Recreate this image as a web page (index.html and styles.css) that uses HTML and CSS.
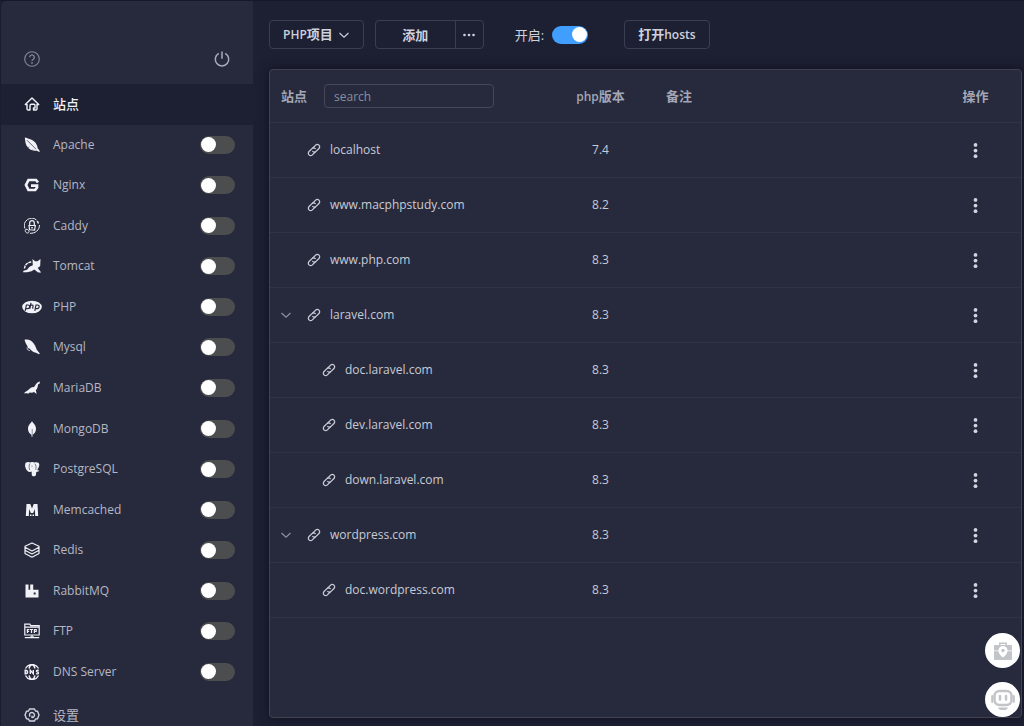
FILE: index.html
```
<!DOCTYPE html>
<html lang="zh-CN">
<head>
<meta charset="utf-8">
<title>站点</title>
<link rel="stylesheet" href="styles.css">
</head>
<body>
<svg class="sprite" aria-hidden="true">
  <symbol id="link" viewBox="0 0 24 24"><g fill="none" stroke="currentColor" stroke-width="2.200" stroke-linecap="round"><path d="M9.500 9l5.300-5.300a4 4 0 0 1 5.700 5.700l-5 5a4 4 0 0 1-5.700 0"/><path d="M14.500 15l-5.300 5.300a4 4 0 0 1-5.700-5.700l5-5a4 4 0 0 1 5.700 0"/></g></symbol>
  <symbol id="more" viewBox="0 0 16 16"><g fill="currentColor"><circle cx="8" cy="2" r="2"/><circle cx="8" cy="8" r="2"/><circle cx="8" cy="14" r="2"/></g></symbol>
  <symbol id="chevron" viewBox="0 0 12 12"><path d="M1.500 4L6 8.200 10.500 4" fill="none" stroke="currentColor" stroke-width="1.100"/></symbol>
</svg>
<div class="app">
  <aside class="sidebar">
    <div class="sidebar-top">
      <button class="icon-button help" aria-label="帮助"><svg class="icon" viewBox="0 0 16 16"><g fill="none" stroke="currentColor" stroke-width="1.100"><circle cx="8" cy="8" r="7.300"/><path d="M5.700 6.200a2.300 2.300 0 1 1 3.500 2c-.9.500-1.200.8-1.200 1.800" stroke-width="1.300"/></g><circle cx="8" cy="11.900" r=".9" fill="currentColor"/></svg></button>
      <button class="icon-button power" aria-label="电源"><svg class="icon" viewBox="0 0 16 16"><path d="M4.800 2.300a6.700 6.700 0 1 0 6.400 0M8 .5v7.300" fill="none" stroke="currentColor" stroke-width="1.500"/></svg></button>
    </div>
    <nav class="services">
      <div class="service active">
        <svg class="icon" viewBox="0 0 16 16"><path d="M6 14H4.200A1.200 1.200 0 0 1 3 12.800V8.500H1.300L8 2l6.700 6.500H13v4.300a1.200 1.200 0 0 1-1.200 1.200H9.500v-2H11V9.200a1 1 0 0 0-1-1H7.500c-1 0-1.500.7-1.500 1.500z" fill="none" stroke="currentColor" stroke-width="1.400" stroke-linejoin="round"/></svg>
        <a class="name" href="#sites">站点</a>
      </div>
      <div class="service">
        <svg class="icon" viewBox="0 0 16 16"><path d="M.8.500C4 1.500 8.500 2.200 11.300 5.500c1.500 1.800 2 3.800 2.400 5.700l2.100 2.800-.5 1-2.500-1.200C8 14 4.300 12 2.500 8.500 1.200 6 1.200 3 .8.500z" fill="currentColor"/><path d="M3 3.200l9 9" stroke="#272a3d" stroke-width=".7"/><path d="M4 10.700l1.300-.9M8 13.500l.8-1" stroke="#272a3d" stroke-width=".6"/></svg>
        <label class="name latin" for="s-apache">Apache</label><input class="switch" type="checkbox" id="s-apache">
      </div>
      <div class="service">
        <svg class="icon" viewBox="0 0 16 16"><path d="M14 5.500L12 3H4.500L2 8l2.500 5h6.700l1.800-2.500V8.700H7" fill="none" stroke="currentColor" stroke-width="2.700"/></svg>
        <label class="name latin" for="s-nginx">Nginx</label><input class="switch" type="checkbox" id="s-nginx">
      </div>
      <div class="service">
        <svg class="icon" viewBox="0 0 16 16"><g fill="none" stroke="currentColor"><path d="M.9 10.500A7.400 7.400 0 0 1 12.500 2M15.500 7c0 5-4.200 8.600-9.500 8.300M2 11.200c3.500 0 3.800 3.500 1.800 3.800S.3 12.500 2 11.200z"/><path d="M5.700 7V5a2.300 2.300 0 0 1 4.600 0v2M5 7.500h6.300l-.7 4.700-5-.4z" stroke-width="1.200"/><path d="M8 9v1.500M13.300 3l1.200 2.500" stroke-width="1.500"/></g></svg>
        <label class="name latin" for="s-caddy">Caddy</label><input class="switch" type="checkbox" id="s-caddy">
      </div>
      <div class="service">
        <svg class="icon wide" viewBox="0 0 20 16"><path d="M10.500 1l2.500 2.200h2.500L18.500 1l-.3 7-2.500 2 3.500 4.500h-3l-4-3-2.700 1.700-4.500 1.100H1l.5-1.500 3.500-1 2.500-3 3.300-1.500z" fill="currentColor"/><path d="M2.500 10.500C2.800 7 5 4.500 9.500 4" fill="none" stroke="currentColor" stroke-width="1.400" stroke-dasharray="3 .6"/></svg>
        <label class="name latin" for="s-tomcat">Tomcat</label><input class="switch" type="checkbox" id="s-tomcat">
      </div>
      <div class="service">
        <svg class="icon wide" viewBox="0 0 20 16"><ellipse cx="10" cy="8" rx="9.800" ry="6.300" fill="currentColor"/><g fill="none" stroke="#272a3d" stroke-width="1.200"><path d="M3.200 11.800L4.400 6h1.700c2.500 0 1.800 3.600-.4 3.600H4M9 3.800L7.900 9.700M8.500 6.200h1.700c1.100 0 .9.900.8 1.400l-.4 2.100M12.800 11.800L14 6h1.600c2.500 0 1.800 3.600-.4 3.600h-1.600"/></g></svg>
        <label class="name latin" for="s-php">PHP</label><input class="switch" type="checkbox" id="s-php">
      </div>
      <div class="service">
        <svg class="icon" viewBox="0 0 16 16"><path d="M.5.800C4.500 0 7.500 1.500 9.700 4.500c1.500 2 2.300 4 2.900 6l3.200 4-.8.700-3-1.400C9.300 13.500 7 11.500 5.800 9.700L4 9 3.300 7 1.500 3.700z" fill="currentColor"/><path d="M3 8.500l.5 2.200 2.500 1" fill="none" stroke="currentColor" stroke-width=".7"/></svg>
        <label class="name latin" for="s-mysql">Mysql</label><input class="switch" type="checkbox" id="s-mysql">
      </div>
      <div class="service">
        <svg class="icon" viewBox="0 0 16 16"><path d="M15.800 1.500l-.1 2-1.700.9c-.2 2.200-.5 4-2.100 5.700l.7 4-2.600-2-2 .7-2.300-.3L3.800 14l-.6-1-2.900.5.500-1.300 2.800-1.700c2-2.200 3.600-3.400 6.300-3.600 1.900-1 1.600-4.300 5.900-5.400z" fill="currentColor"/></svg>
        <label class="name latin" for="s-mariadb">MariaDB</label><input class="switch" type="checkbox" id="s-mariadb">
      </div>
      <div class="service">
        <svg class="icon" viewBox="0 0 16 16"><path d="M8 0c.6 2 4 3.500 4 7.700 0 3-1.500 4.800-3.500 6.200L8.300 16h-.6l-.2-2.100C5.500 12.500 4 10.700 4 7.700 4 3.500 7.400 2 8 0z" fill="currentColor"/><path d="M8.200 8v6" stroke="#272a3d" stroke-width=".5"/></svg>
        <label class="name latin" for="s-mongodb">MongoDB</label><input class="switch" type="checkbox" id="s-mongodb">
      </div>
      <div class="service">
        <svg class="icon" viewBox="0 0 16 16"><path d="M1.500 2C3 .7 5 1 6.500 1.500 8 .7 9.500 1 10.500 1.500c2-.8 4.700-.2 4.800 2 .1 2-1.300 4-2 5.700l2 .3c-.5 1-1.500 1.400-3 1.400l-.4 3c-.3 1.700-3.900 2-4.100 0l-.2-3.500-1.500.5C3.500 11.500 1.200 7.500 1 4.300z" fill="currentColor"/><path d="M5.800 2.500C4.700 4.500 5.200 6.500 5.600 9M11 2.800c1.300 1.700 1.100 3.800.8 6M7.500 5l1 .3" fill="none" stroke="#272a3d" stroke-width=".6"/></svg>
        <label class="name latin" for="s-postgres">PostgreSQL</label><input class="switch" type="checkbox" id="s-postgres">
      </div>
      <div class="service">
        <svg class="icon" viewBox="0 0 16 16"><path d="M2.500 2h3.800L8 6.500 9.700 2h3.800l.7 12h-3l-.4-7L9.200 11H6.800L5.200 7l-.4 7h-3zM6 12.500h1.500V14H6zM8.500 12.500H10V14H8.500z" fill="currentColor"/></svg>
        <label class="name latin" for="s-memcached">Memcached</label><input class="switch" type="checkbox" id="s-memcached">
      </div>
      <div class="service">
        <svg class="icon" viewBox="0 0 16 16"><g fill="none" stroke="currentColor" stroke-width="1.200" stroke-linejoin="round"><path d="M8 1l7 3.300v1L8 9 1 5.300v-1zM1 5v3.300L8 12l7-3.700V5M1 8v3.500L8 15.200l7-3.700V8"/></g></svg>
        <label class="name latin" for="s-redis">Redis</label><input class="switch" type="checkbox" id="s-redis">
      </div>
      <div class="service">
        <svg class="icon" viewBox="0 0 16 16"><path d="M1.500 1.500h3v5.300h1.700V1.500h3v5.300h5.300v7.700h-13z" fill="currentColor"/><path d="M9.700 9.500h2v2h-2z" fill="#272a3d"/></svg>
        <label class="name latin" for="s-rabbit">RabbitMQ</label><input class="switch" type="checkbox" id="s-rabbit">
      </div>
      <div class="service">
        <svg class="icon" viewBox="0 0 16 16"><g fill="none" stroke="currentColor" stroke-width="1.200"><path d="M.8 12V1.200h5l1 1.500h8.400V12zM.8 4.200h14.400M8 12v2.500M.8 14.700h14.400M6 14h4"/><path d="M3.400 10V6.500h2M3.400 8.300h1.700M6 6.500h3M7.500 6.500V10M10.400 10V6.500h1.800v2h-1.800"/></g></svg>
        <label class="name latin" for="s-ftp">FTP</label><input class="switch" type="checkbox" id="s-ftp">
      </div>
      <div class="service">
        <svg class="icon" viewBox="0 0 16 16"><g fill="none" stroke="currentColor" stroke-width="1.400"><path d="M1.500 4.500a7.300 7.300 0 0 1 13 0M1.500 11.500a7.300 7.300 0 0 0 13 0M5 4.500C5.600 2.500 6.800.8 8 .8s2.400 1.700 3 3.700M5 11.500c.6 2 1.800 3.700 3 3.700s2.400-1.700 3-3.700"/><path d="M1.200 6.200v3.600c3.200 0 3.200-3.600 0-3.600zM6.300 10V6.300l3 3.400V6M14.800 6.500c-2-.8-3.200.6-1.600 1.400 2.300.6 1.200 2.600-1.200 1.700"/></g></svg>
        <label class="name latin" for="s-dns">DNS Server</label><input class="switch" type="checkbox" id="s-dns">
      </div>
    </nav>
    <div class="settings">
      <svg class="icon" viewBox="0 0 16 16"><g fill="none" stroke="currentColor" stroke-width="1.400" stroke-linejoin="round"><path d="M5.500 2h5l1 2 2 .3L15 8l-1.500 3.700-2 .3-1 2h-5l-1-2-2-.3L1 8l1.500-3.700 2-.3z"/><path d="M6 9.500A2.500 2.500 0 1 1 8 10.500V8.700"/></g></svg>
      <a class="name" href="#settings">设置</a>
    </div>
  </aside>
  <main class="main">
    <div class="toolbar">
      <button class="button"><span><span class="latin">PHP</span>项目</span><svg class="caret"><use href="#chevron"/></svg></button>
      <div class="button-group">
        <button class="button add">添加</button>
        <button class="button extra" aria-label="更多"><svg class="caret" viewBox="0 0 12 12"><g fill="currentColor"><circle cx="1.500" cy="6" r="1.300"/><circle cx="6" cy="6" r="1.300"/><circle cx="10.500" cy="6" r="1.300"/></g></svg></button>
      </div>
      <div class="enable"><label for="enable">开启:</label><input class="switch" type="checkbox" id="enable" checked></div>
      <button class="button"><span>打开<span class="latin">hosts</span></span></button>
    </div>
    <section class="card">
      <table class="sites">
        <colgroup><col class="col-site"><col class="col-version"><col><col class="col-action"></colgroup>
        <thead>
          <tr><th><div class="search-cell"><label for="search">站点</label><input class="search latin" id="search" type="text" placeholder="search"></div></th><th class="center"><span class="latin">php</span>版本</th><th class="note">备注</th><th class="center">操作</th></tr>
        </thead>
        <tbody class="latin">
          <tr><td><div class="site"><span class="toggle"></span><svg class="link"><use href="#link"/></svg><a href="#s1">localhost</a></div></td><td class="center">7.4</td><td></td><td><button class="icon-button row-menu" aria-label="操作"><svg class="icon"><use href="#more"/></svg></button></td></tr>
          <tr><td><div class="site"><span class="toggle"></span><svg class="link"><use href="#link"/></svg><a href="#s2">www.macphpstudy.com</a></div></td><td class="center">8.2</td><td></td><td><button class="icon-button row-menu" aria-label="操作"><svg class="icon"><use href="#more"/></svg></button></td></tr>
          <tr><td><div class="site"><span class="toggle"></span><svg class="link"><use href="#link"/></svg><a href="#s3">www.php.com</a></div></td><td class="center">8.3</td><td></td><td><button class="icon-button row-menu" aria-label="操作"><svg class="icon"><use href="#more"/></svg></button></td></tr>
          <tr><td><div class="site"><button class="toggle" aria-label="收起"><svg class="caret"><use href="#chevron"/></svg></button><svg class="link"><use href="#link"/></svg><a href="#s4">laravel.com</a></div></td><td class="center">8.3</td><td></td><td><button class="icon-button row-menu" aria-label="操作"><svg class="icon"><use href="#more"/></svg></button></td></tr>
          <tr><td><div class="site child"><span class="toggle"></span><svg class="link"><use href="#link"/></svg><a href="#s5">doc.laravel.com</a></div></td><td class="center">8.3</td><td></td><td><button class="icon-button row-menu" aria-label="操作"><svg class="icon"><use href="#more"/></svg></button></td></tr>
          <tr><td><div class="site child"><span class="toggle"></span><svg class="link"><use href="#link"/></svg><a href="#s6">dev.laravel.com</a></div></td><td class="center">8.3</td><td></td><td><button class="icon-button row-menu" aria-label="操作"><svg class="icon"><use href="#more"/></svg></button></td></tr>
          <tr><td><div class="site child"><span class="toggle"></span><svg class="link"><use href="#link"/></svg><a href="#s7">down.laravel.com</a></div></td><td class="center">8.3</td><td></td><td><button class="icon-button row-menu" aria-label="操作"><svg class="icon"><use href="#more"/></svg></button></td></tr>
          <tr><td><div class="site"><button class="toggle" aria-label="收起"><svg class="caret"><use href="#chevron"/></svg></button><svg class="link"><use href="#link"/></svg><a href="#s8">wordpress.com</a></div></td><td class="center">8.3</td><td></td><td><button class="icon-button row-menu" aria-label="操作"><svg class="icon"><use href="#more"/></svg></button></td></tr>
          <tr><td><div class="site child"><span class="toggle"></span><svg class="link"><use href="#link"/></svg><a href="#s9">doc.wordpress.com</a></div></td><td class="center">8.3</td><td></td><td><button class="icon-button row-menu" aria-label="操作"><svg class="icon"><use href="#more"/></svg></button></td></tr>
        </tbody>
      </table>
    </section>
  </main>
</div>
<div class="floating">
  <button class="float-button" aria-label="工具箱"><svg viewBox="0 0 20 20"><path d="M6 4V1.500h8V4h4a1 1 0 0 1 1 1v4.500h-4.500a4.500 4.500 0 0 0-9 0H1V5a1 1 0 0 1 1-1zM7.500 4h5V3h-5zM1 10.200h4.500c.5 2.800 2.500 4.800 4.500 6.300 2-1.500 4-3.500 4.500-6.300H19V18a1 1 0 0 1-1 1H2a1 1 0 0 1-1-1z" fill="currentColor"/><path d="M10 5.500a4 4 0 0 1 4 4c0 2.500-2 4.500-4 6.500-2-2-4-4-4-6.500a4 4 0 0 1 4-4z" fill="#fff"/><circle cx="10" cy="9.500" r="1.700" fill="currentColor"/></svg></button>
  <button class="float-button" aria-label="助手"><svg class="robot" viewBox="0 0 24 22"><path d="M1.200 7v6M22.800 7v6" stroke="currentColor" stroke-width="2" stroke-linecap="round"/><rect x="3.500" y="2" width="17" height="14" rx="5" fill="none" stroke="currentColor" stroke-width="2.500"/><path d="M9 7v3.500M15 7v3.500" stroke="currentColor" stroke-width="2.500" stroke-linecap="round"/><path d="M7 18.500h10q-1 2.500-3 2.500h-4q-2 0-3-2.500z" fill="currentColor"/></svg></button>
</div>
</body>
</html>
```
FILE: styles.css
```
* { box-sizing: border-box; }
body {
  margin: 0;
  background: #1d2033;
  color: #b9bbc9;
  font: 13px/20px "Open Sans", "Noto Sans CJK SC", sans-serif;
}
button, input { font: inherit; color: inherit; }
button { padding: 0; border: 0; background: none; }
a { color: inherit; text-decoration: none; }
.latin { font-size: 12px; }
.sprite { display: none; }

.app { display: flex; height: 100vh; border-top: 1px solid #15172a; overflow: hidden; }

.sidebar {
  display: flex;
  flex-direction: column;
  flex: 0 0 253px;
  background: #272a3d;
  border-left: 1px solid #1b1d2e;
  border-top-left-radius: 6px;
}
.sidebar-top {
  display: flex;
  justify-content: space-between;
  align-items: flex-end;
  height: 83px;
  padding: 0 23px 17px;
}
.icon { display: block; flex: none; width: 16px; height: 16px; }
.wide { width: 20px; margin: 0 -2px; }
.icon-button { color: #d2d4de; }
.help { color: #858897; }
.power { color: #a9abb9; }
.services { display: flex; flex: 1; flex-direction: column; color: #f1f2f7; }
.service { display: flex; flex: 1; align-items: center; padding: 0 18px 0 23px; }
.service .name, .settings .name { flex: 1; margin-left: 13px; color: #b5b7c4; }
.service.active { background: #1d2033; }
.service.active .name { color: #f0f1f6; font-weight: 500; }
.settings { display: flex; align-items: center; height: 34px; padding: 12px 23px 0; color: #d2d4de; }

.switch {
  appearance: none;
  display: flex;
  align-items: center;
  width: 35px;
  height: 18px;
  margin: 0;
  padding: 1px;
  border-radius: 9px;
  background: #4c4d4f;
}
.switch::before { content: ""; width: 15px; height: 15px; border-radius: 50%; background: #fff; }
.switch:checked { justify-content: flex-end; background: #409eff; }

.main { display: flex; flex: 1; flex-direction: column; min-width: 0; padding: 19px 2px 8px 16px; }
.toolbar { display: flex; align-items: center; margin-bottom: 20px; color: #cfd1dc; }
.button {
  display: flex;
  align-items: center;
  justify-content: center;
  height: 29px;
  padding: 0 13px;
  border: 1px solid #3b3e50;
  border-radius: 4px;
  font-weight: 600;
}
.caret { display: block; width: 12px; height: 12px; }
.button .caret { margin-left: 5px; }
.button-group { display: flex; margin: 0 31px 0 11px; }
.add { width: 81px; border-radius: 4px 0 0 4px; }
.button.extra { width: 29px; padding: 0; margin-left: -1px; border-radius: 0 4px 4px 0; }
.extra .caret { margin: 0; }
.enable { display: flex; align-items: center; gap: 8px; margin-right: 36px; }
.enable .switch { width: 36px; }

.card {
  flex: 1;
  min-height: 0;
  background: #272a3d;
  border: 1px solid #40424f;
  border-radius: 4px;
  box-shadow: 0 0 12px #10111f;
}
.sites { width: 100%; border-collapse: separate; border-spacing: 0; table-layout: fixed; }
.col-site { width: 285px; }
.col-version, .col-action { width: 91px; }
.sites th, .sites td { padding: 0; border-bottom: 1px solid #303346; text-align: left; }
.sites th { height: 53px; color: #a3a6b4; font-weight: 600; }
.sites td { height: 55px; color: #c8cad6; }
.sites .center { text-align: center; }
.sites .note { padding-left: 20px; }
.row-menu { display: block; margin: 0 auto; }
.row-menu .icon { width: 15px; height: 15px; }
.search-cell { display: flex; align-items: center; gap: 17px; padding-left: 11px; }
.search {
  width: 170px;
  height: 24px;
  padding: 0 9px;
  border: 1px solid #444758;
  border-radius: 4px;
  background: transparent;
  font-weight: 400;
}
.search::placeholder { color: #8b8e9d; opacity: 1; }
.site { display: flex; align-items: center; padding-left: 10px; }
.site.child { padding-left: 25px; }
.toggle { width: 12px; margin-right: 15px; color: #8f92a2; }
.link { width: 14px; height: 14px; margin-right: 9px; }

.floating { position: absolute; right: 4px; bottom: 9px; display: grid; gap: 14px; }
.float-button {
  display: grid;
  place-items: center;
  width: 35px;
  height: 35px;
  border-radius: 50%;
  background: #fff;
  color: #c2c4c8;
}
.float-button svg { width: 20px; height: 20px; }
.float-button .robot { width: 24px; height: 22px; }
```
